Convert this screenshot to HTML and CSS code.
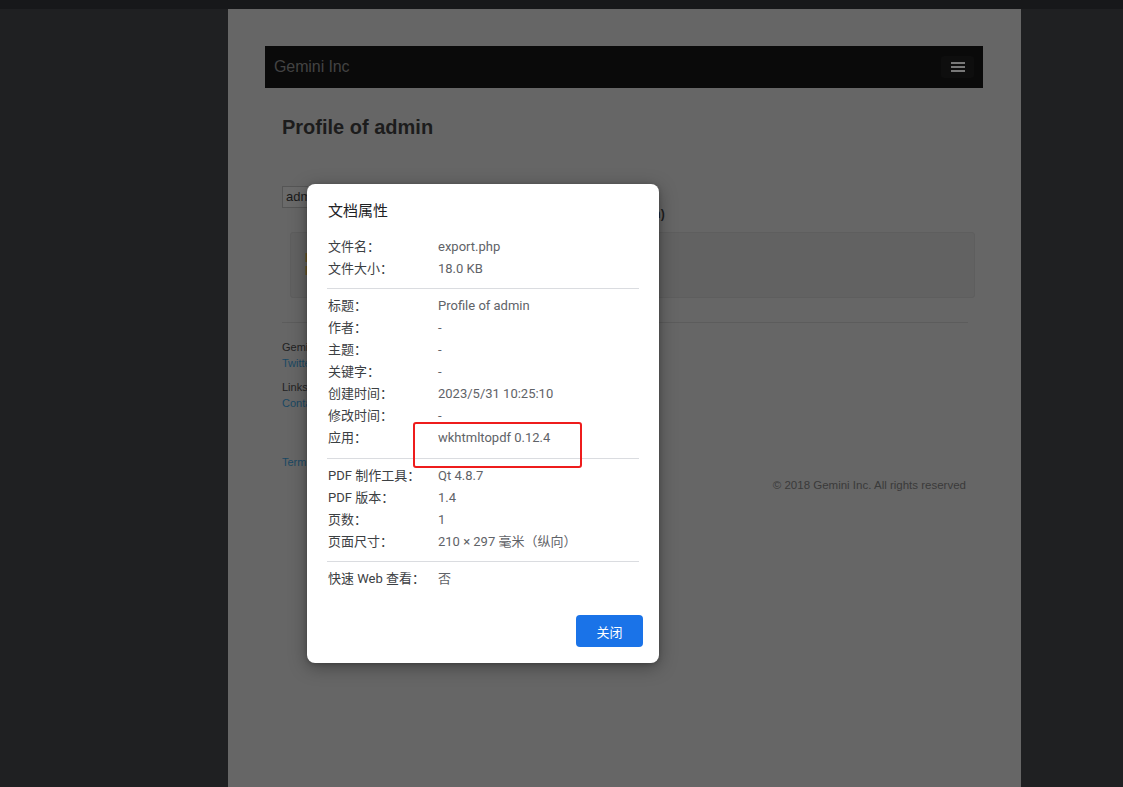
FILE: index.html
```html
<!DOCTYPE html>
<html lang="zh-CN">
<head>
<meta charset="utf-8">
<title>export.php</title>
<link rel="stylesheet" href="styles.css">
</head>
<body>
<div class="topbar"></div>
<div class="viewer">
  <div class="sheet">
    <div class="navbar">
      <span class="brand">Gemini Inc</span>
      <span class="menu-btn"><i></i><i></i><i></i></span>
    </div>
    <div class="content">
      <h1 class="title">Profile of admin</h1>
      <div class="form-row">
        <span class="input">admin</span>
        <span class="user-label">Username (admin)</span>
      </div>
      <div class="well">
        <div class="warn">Error</div>
        <div class="warn">Note</div>
      </div>
      <div class="rule"></div>
      <div class="foot-block">
        <div class="foot-text">Gemini Inc</div>
        <div class="foot-link">Twitter</div>
      </div>
      <div class="foot-block gap">
        <div class="foot-text">Links</div>
        <div class="foot-link">Contact</div>
      </div>
      <div class="foot-block terms">
        <div class="foot-link">Terms</div>
      </div>
      <div class="copyright">© 2018 Gemini Inc. All rights reserved</div>
    </div>
  </div>
</div>

<div class="modal">
  <div class="modal-title">文档属性</div>
  <div class="props">
    <div class="prop"><span class="k">文件名：</span><span class="v">export.php</span></div>
    <div class="prop"><span class="k">文件大小：</span><span class="v">18.0 KB</span></div>
  </div>
  <div class="divider"></div>
  <div class="props">
    <div class="prop"><span class="k">标题：</span><span class="v">Profile of admin</span></div>
    <div class="prop"><span class="k">作者：</span><span class="v">-</span></div>
    <div class="prop"><span class="k">主题：</span><span class="v">-</span></div>
    <div class="prop"><span class="k">关键字：</span><span class="v">-</span></div>
    <div class="prop"><span class="k">创建时间：</span><span class="v">2023/5/31 10:25:10</span></div>
    <div class="prop"><span class="k">修改时间：</span><span class="v">-</span></div>
    <div class="prop"><span class="k">应用：</span><span class="v">wkhtmltopdf 0.12.4</span></div>
  </div>
  <div class="divider d2"></div>
  <div class="props">
    <div class="prop"><span class="k">PDF 制作工具：</span><span class="v">Qt 4.8.7</span></div>
    <div class="prop"><span class="k">PDF 版本：</span><span class="v">1.4</span></div>
    <div class="prop"><span class="k">页数：</span><span class="v">1</span></div>
    <div class="prop"><span class="k">页面尺寸：</span><span class="v">210 × 297 毫米（纵向）</span></div>
  </div>
  <div class="divider d3"></div>
  <div class="props">
    <div class="prop"><span class="k">快速 Web 查看：</span><span class="v">否</span></div>
  </div>
  <div class="modal-foot">
    <button class="close-btn">关闭</button>
  </div>
</div>

<div class="highlight"></div>
</body>
</html>
```

FILE: styles.css
```css
html, body {
  margin: 0;
  padding: 0;
}
body {
  background: #1f2022;
  height: 787px;
  overflow: hidden;
  font-family: "Liberation Sans", Arial, sans-serif;
}
.topbar {
  height: 9px;
  background: #17181a;
}
.viewer {
  padding-left: 228px;
}
.sheet {
  width: 793px;
  height: 778px;
  background: #666666;
  box-sizing: border-box;
  padding: 37px 38px 0 37px;
}
.navbar {
  height: 42px;
  background: #0a0a0a;
  display: flex;
  align-items: center;
  justify-content: space-between;
  padding: 0 9px 0 9px;
}
.brand {
  color: #434343;
  font-size: 16px;
  letter-spacing: -0.1px;
}
.menu-btn {
  width: 33px;
  height: 22px;
  background: #0e0e0e;
  border-radius: 3px;
  display: flex;
  flex-direction: column;
  align-items: center;
  justify-content: center;
  gap: 2px;
}
.menu-btn i {
  display: block;
  width: 14px;
  height: 2px;
  background: #787878;
}
.content {
  padding: 0 15px 0 17px;
}
.title {
  margin: 27px 0 0 0;
  font-size: 20px;
  line-height: 24px;
  font-weight: bold;
  color: #1c1c1c;
}
.form-row {
  margin-top: 47px;
  display: flex;
  align-items: flex-start;
}
.input {
  display: block;
  width: 180px;
  height: 20px;
  border: 1px solid #555;
  background: #6a6a6a;
  color: #1a1a1a;
  font-size: 13px;
  line-height: 20px;
  padding-left: 3px;
}
.user-label {
  margin-top: 21px;
  margin-left: 93px;
  font-size: 12px;
  line-height: 14px;
  font-weight: bold;
  color: #1c1c1c;
}
.well {
  margin: 11px -7px 0 8px;
  height: 66px;
  background: #626262;
  border: 1px solid #5e5e5e;
  border-radius: 3px;
  padding: 19px 0 0 14px;
  box-sizing: border-box;
}
.warn {
  color: #6e5220;
  font-size: 12px;
  line-height: 13px;
  font-weight: bold;
}
.rule {
  margin-top: 24px;
  height: 1px;
  background: #5c5c5c;
}
.foot-block {
  margin-top: 16px;
  font-size: 11px;
  line-height: 16px;
}
.foot-block.gap {
  margin-top: 8px;
}
.foot-block.terms {
  margin-top: 43px;
}
.foot-text {
  color: #222;
}
.foot-link {
  color: #1a4863;
}
.copyright {
  margin-top: 7px;
  text-align: right;
  font-size: 11.5px;
  line-height: 16px;
  color: #3a3a3a;
  padding-right: 2px;
}

/* modal */
.modal {
  position: absolute;
  left: 307px;
  top: 184px;
  width: 352px;
  height: 479px;
  box-sizing: border-box;
  background: #ffffff;
  border-radius: 8px;
  box-shadow: 0 4px 18px rgba(0, 0, 0, 0.35), 0 1px 4px rgba(0, 0, 0, 0.2);
  padding: 16px 20px 16px 21px;
  display: flex;
  flex-direction: column;
  font-family: Roboto, "Noto Sans CJK SC", sans-serif;
}
.modal-title {
  font-size: 15px;
  line-height: 22px;
  color: #202124;
  margin-bottom: 14px;
}
.prop {
  display: grid;
  grid-template-columns: 110px 1fr;
  font-size: 13px;
  line-height: 22px;
  height: 22px;
}
.k {
  color: #3c4043;
  white-space: nowrap;
}
.v {
  color: #5f6368;
  white-space: nowrap;
}
.divider {
  height: 1px;
  background: #dadce0;
  margin: 8px 0 6px -1px;
}
.divider.d2 {
  margin-top: 9px;
}
.modal-foot {
  margin-top: auto;
  margin-right: -4px;
  display: flex;
  justify-content: flex-end;
}
.close-btn {
  width: 67px;
  height: 32px;
  border: none;
  border-radius: 4px;
  background: #1a73e8;
  color: #ffffff;
  font-family: Roboto, "Noto Sans CJK SC", sans-serif;
  font-size: 13px;
  padding: 0;
}
.highlight {
  position: absolute;
  left: 413px;
  top: 422px;
  width: 165px;
  height: 42px;
  border: 2px solid #ee1c1c;
  border-radius: 3px;
}
```
